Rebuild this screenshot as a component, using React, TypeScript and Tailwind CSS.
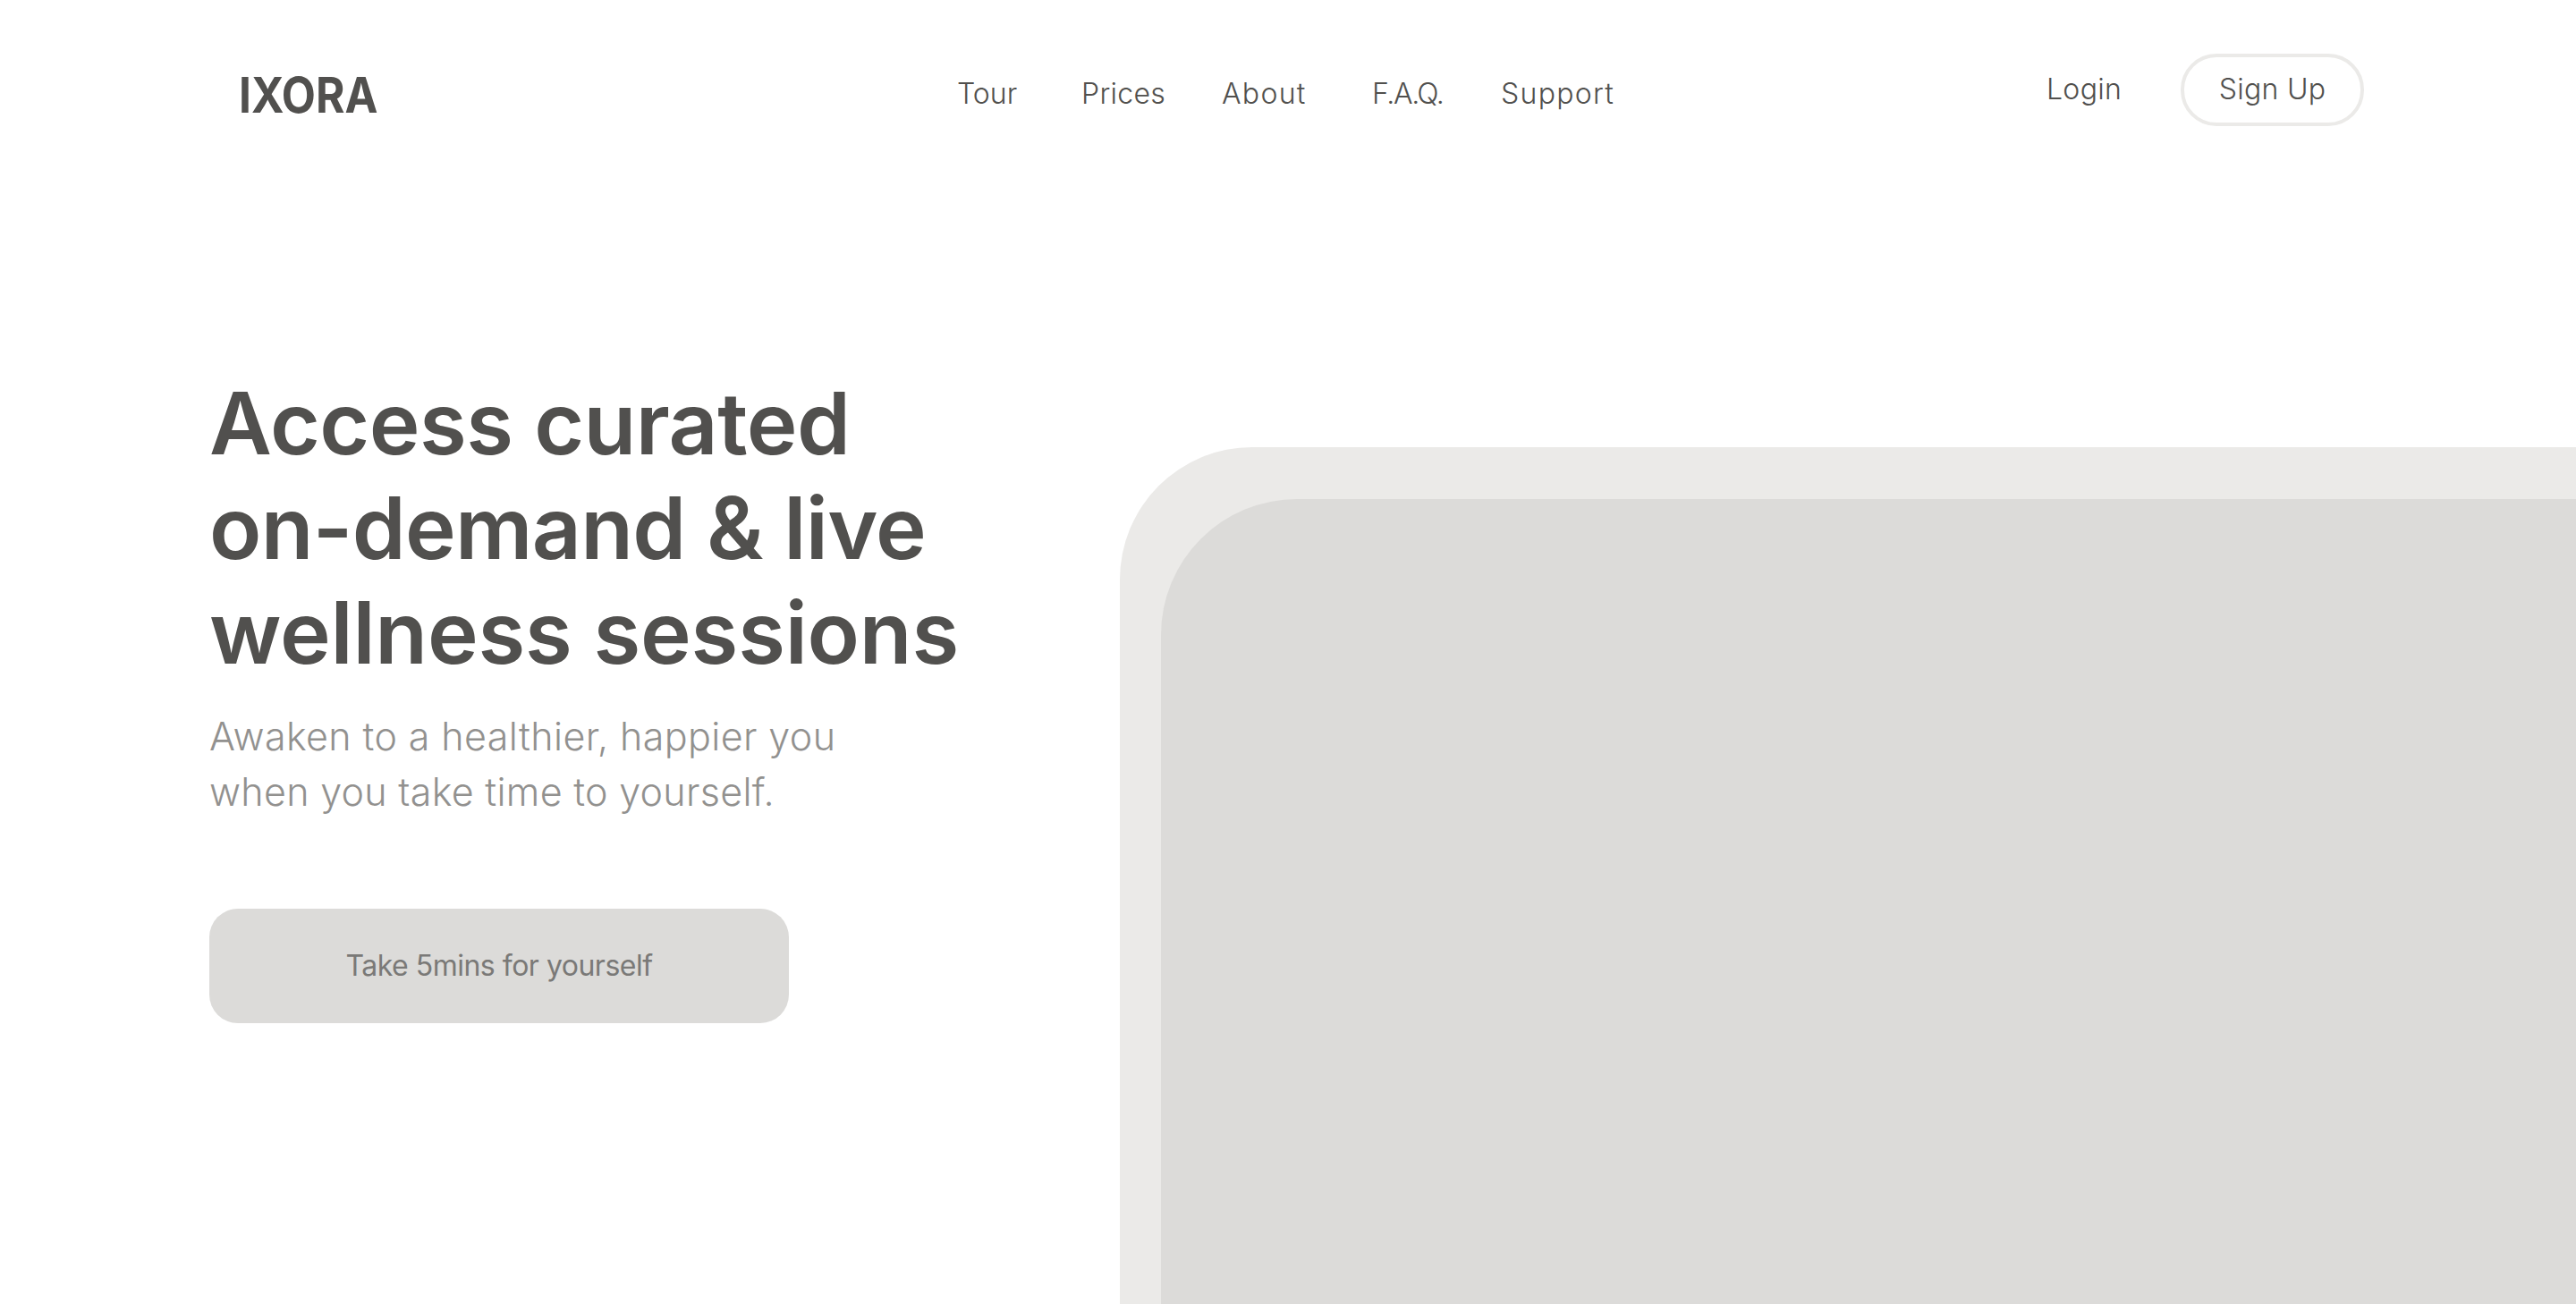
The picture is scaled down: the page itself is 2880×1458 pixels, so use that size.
const sans = "font-['Inter','Liberation_Sans',sans-serif]"

const navLinks = [
  { label: 'Tour', className: 'w-[139px] tracking-[0px]' },
  { label: 'Prices', className: 'w-[157px] tracking-[0.3px]' },
  { label: 'About', className: 'w-[168px] tracking-[1.3px]' },
  { label: 'F.A.Q.', className: 'w-[144px] -tracking-[1.4px]' },
  { label: 'Support', className: 'w-[127px] tracking-[1.3px]' },
]

function Header() {
  return (
    <header className="flex items-center h-[200px] pt-[10px]">
      <div className="w-[1070px] pl-[267px] pt-[2px] text-[55px] font-bold leading-none text-[#51504e]">
        <span className="block origin-left scale-x-[0.9]">IXORA</span>
      </div>
      <nav className="flex w-[1219px] text-[32px] font-light text-[#51504e]">
        {navLinks.map((link) => (
          <a key={link.label} className={link.className}>
            {link.label}
          </a>
        ))}
      </nav>
      <div className="flex items-center -mt-[10px] text-[32px] font-light tracking-[0.3px] text-[#51504e]">
        <a className="w-[150px] -ml-[1px]">Login</a>
        <button className="w-[205px] h-[81px] rounded-[40px] border-[4px] border-[#ebeae8]">Sign Up</button>
      </div>
    </header>
  )
}

function Hero() {
  return (
    <div className="w-[1252px] shrink-0 pl-[234px] pt-[215px]">
      <h1 className="whitespace-nowrap text-[96px] leading-[117px] font-semibold text-[#51504e]">
        <span className="block tracking-[-0.5px]">Access curated</span>
        <span className="block tracking-[-0.7px]">on-demand &amp; live</span>
        <span className="block tracking-[-0.2px]">wellness sessions</span>
      </h1>
      <p className="mt-[26px] text-[43px] leading-[62px] font-light tracking-[0.4px] text-[#92918f]">
        Awaken to a healthier, happier you
        <br />
        <span className="tracking-[0.3px]">when you take time to yourself.</span>
      </p>
      <button className="mt-[100px] w-[648px] h-[128px] rounded-[32px] bg-[#dcdbd9] text-[32px] tracking-[-0.5px] text-[#7a7977]">
        Take 5mins for yourself
      </button>
    </div>
  )
}

export default function App() {
  return (
    <div className={`w-[2880px] h-[1458px] overflow-hidden bg-white ${sans}`}>
      <Header />
      <main className="flex h-[1258px]">
        <Hero />
        <div className="mt-[300px] flex-1 rounded-tl-[148px] bg-[#ebeae8] pl-[46px] pt-[58px]">
          <div className="h-full rounded-tl-[152px] bg-[#dcdbd9]" />
        </div>
      </main>
    </div>
  )
}
